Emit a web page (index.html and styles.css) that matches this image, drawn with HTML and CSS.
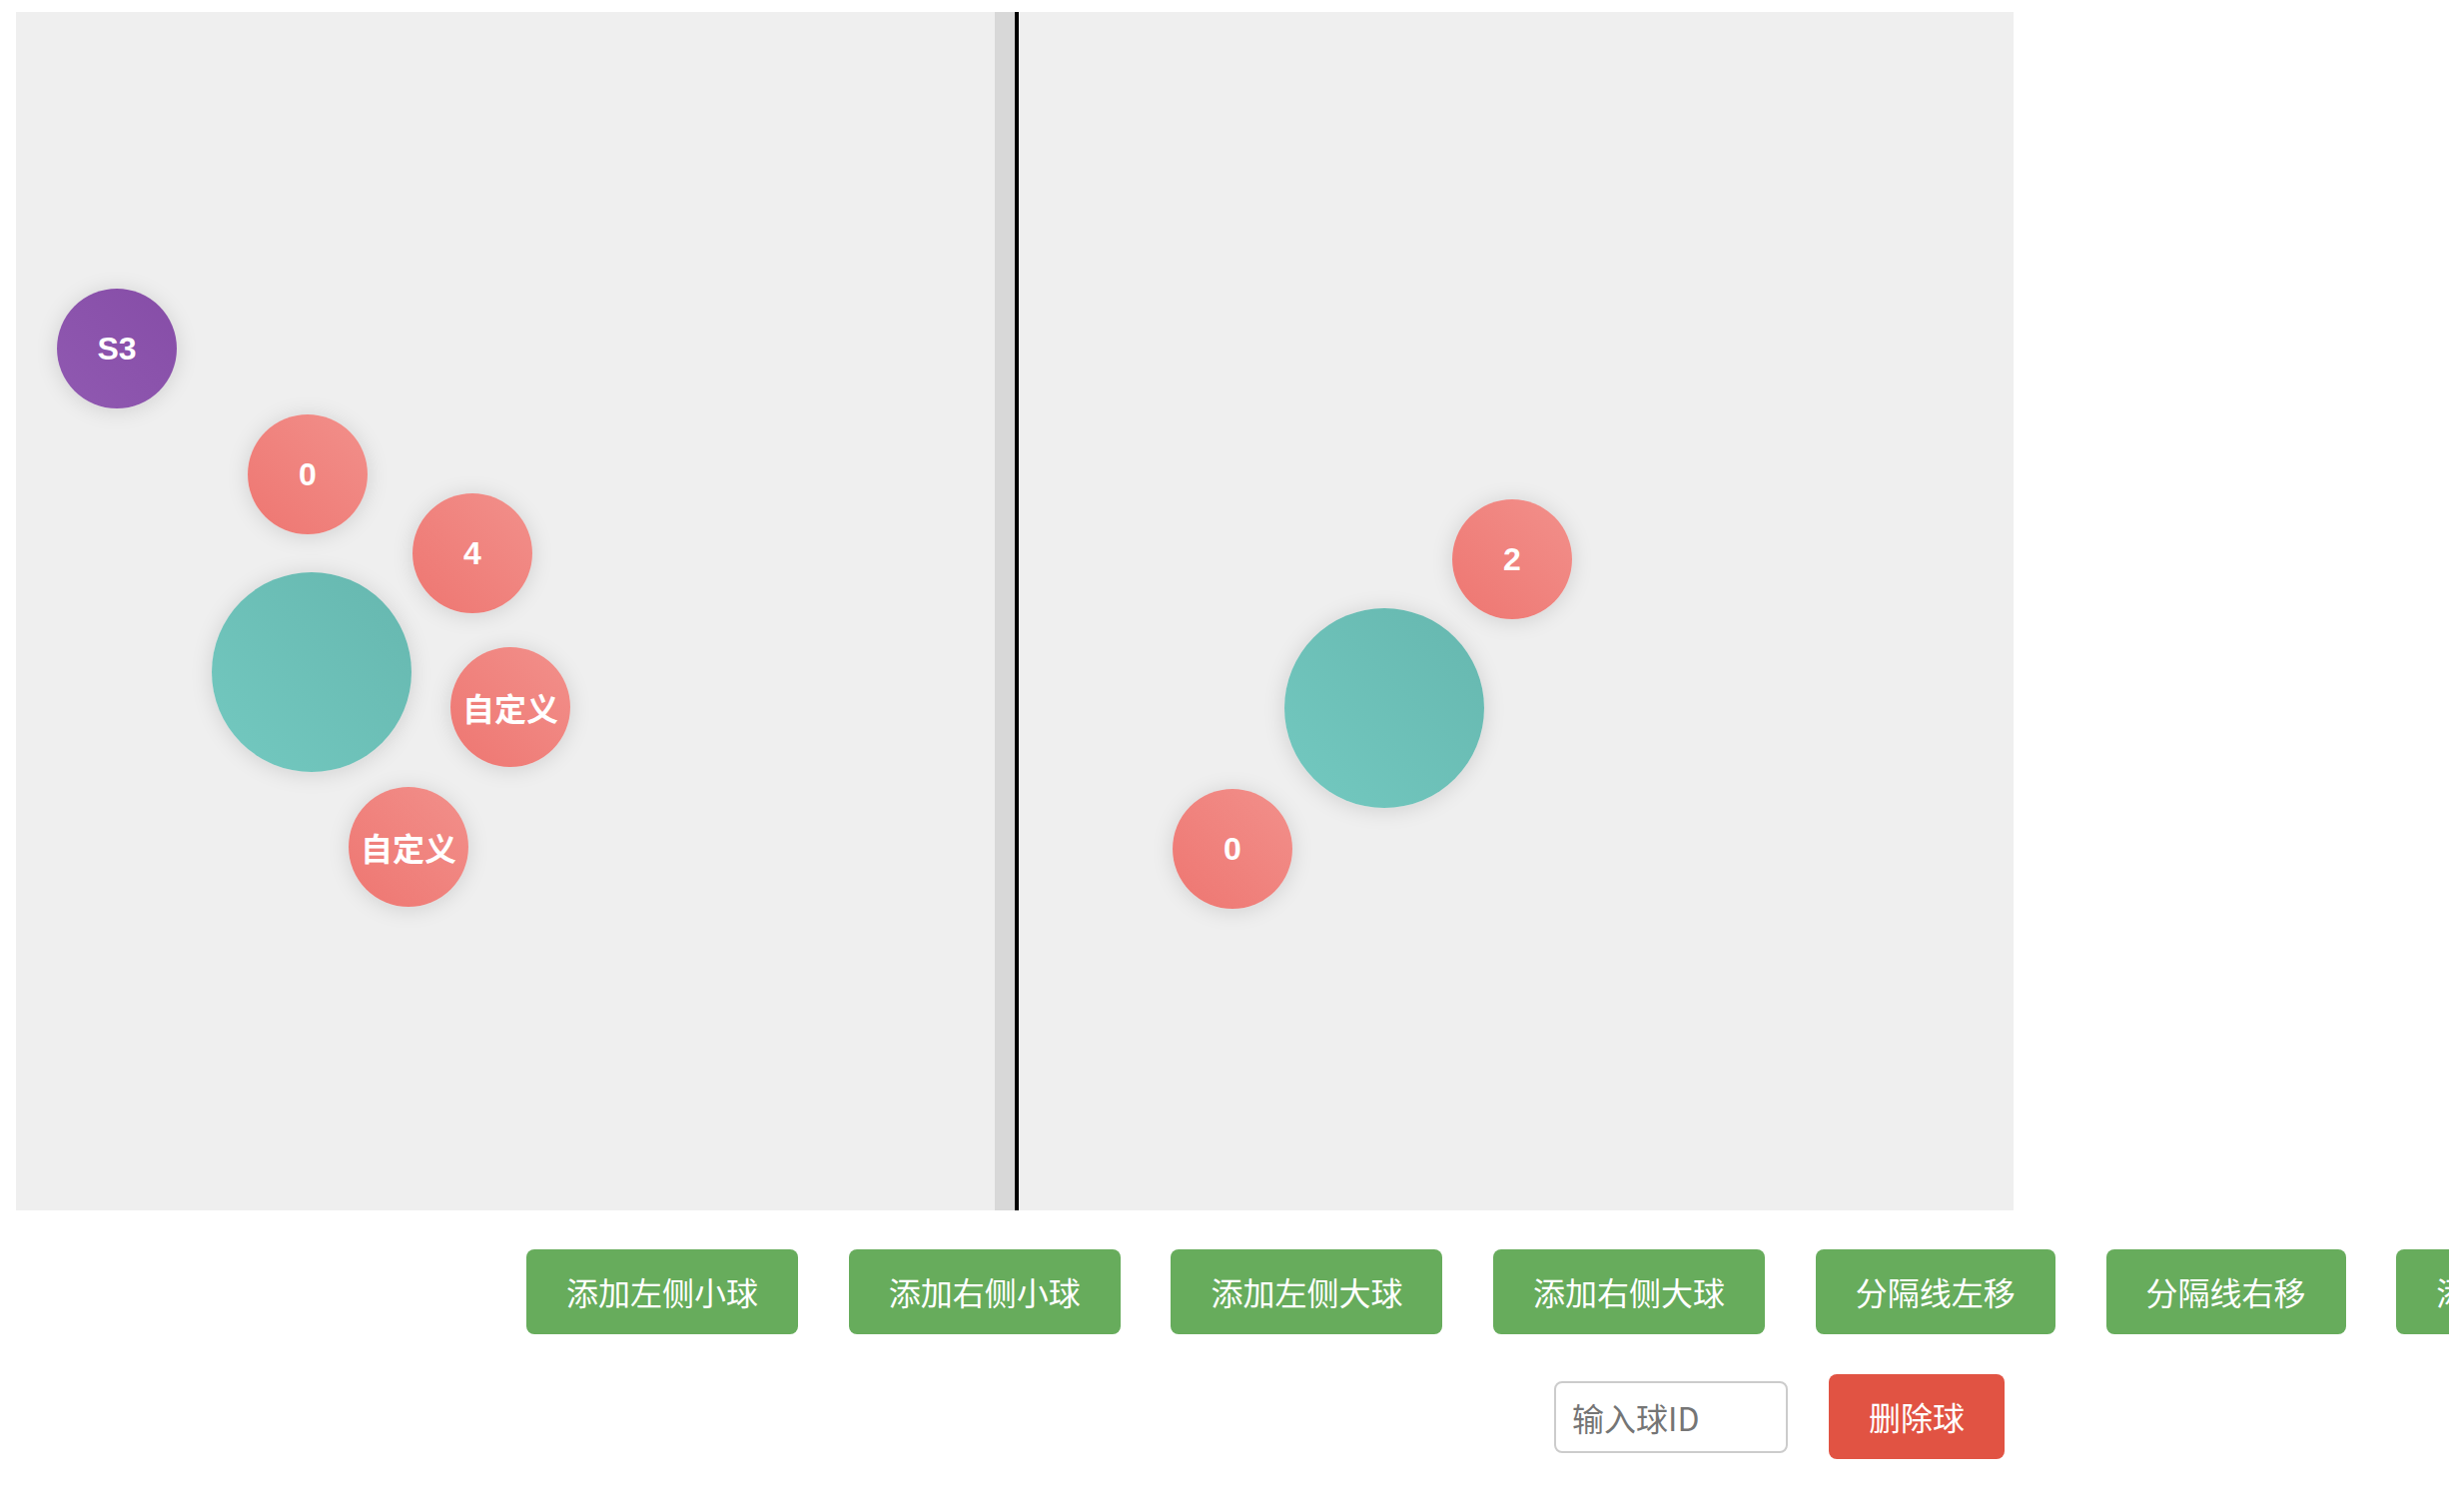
FILE: index.html
```html
<!DOCTYPE html>
<html lang="zh">
<head>
<meta charset="utf-8">
<title>小球</title>
<link rel="stylesheet" href="styles.css">
</head>
<body>
<div class="page">
  <div class="stage">
    <div class="half half-left"></div>
    <div class="splitter"><div class="handle"></div><div class="line"></div></div>
    <div class="half half-right"></div>

    <div class="ball small purple" style="left:41px;top:277px">S3</div>
    <div class="ball small red" style="left:232px;top:403px">0</div>
    <div class="ball small red" style="left:397px;top:482px">4</div>
    <div class="ball big teal" style="left:196px;top:561px"></div>
    <div class="ball small red" style="left:435px;top:636px">自定义</div>
    <div class="ball small red" style="left:333px;top:776px">自定义</div>

    <div class="ball small red" style="left:1438px;top:488px">2</div>
    <div class="ball big teal" style="left:1270px;top:597px"></div>
    <div class="ball small red" style="left:1158px;top:778px">0</div>
  </div>

  <div class="controls">
    <div class="row row-main">
      <button class="btn green">添加左侧小球</button>
      <button class="btn green">添加右侧小球</button>
      <button class="btn green">添加左侧大球</button>
      <button class="btn green">添加右侧大球</button>
      <button class="btn green">分隔线左移</button>
      <button class="btn green">分隔线右移</button>
      <button class="btn green">添加自定义球</button>
    </div>
    <div class="row row-delete">
      <input class="id-input" type="text" placeholder="输入球ID">
      <button class="btn red-btn">删除球</button>
    </div>
  </div>
</div>
</body>
</html>
```

FILE: styles.css
```css
html, body {
  margin: 0;
  padding: 0;
  overflow: hidden;
  background: #ffffff;
  font-family: "Liberation Sans", "Noto Sans CJK SC", sans-serif;
}

.page {
  padding: 12px 0 0 16px;
}

.stage {
  position: relative;
  width: 2000px;
  height: 1200px;
  background: #efefef;
  display: flex;
}

.half {
  flex: 0 0 980px;
  height: 100%;
}

.half-right {
  flex: 1 1 auto;
}

.splitter {
  display: flex;
  height: 100%;
}

.handle {
  width: 20px;
  background: #d8d8d8;
}

.line {
  width: 4px;
  background: #000000;
}

.ball {
  position: absolute;
  border-radius: 50%;
  display: flex;
  align-items: center;
  justify-content: center;
  color: #ffffff;
  font-weight: bold;
  font-size: 32px;
  font-family: "Liberation Sans", "Noto Sans CJK SC", sans-serif;
  box-shadow: 0 2px 22px rgba(0, 0, 0, 0.13);
}

.small {
  width: 120px;
  height: 120px;
}

.big {
  width: 200px;
  height: 200px;
}

.red {
  background: linear-gradient(45deg, #ee7671 0%, #f2908b 100%);
}

.teal {
  background: linear-gradient(45deg, #73c9c0 0%, #66b7af 100%);
}

.purple {
  background: linear-gradient(45deg, #9059b1 0%, #864da7 100%);
}

.controls {
  display: flex;
  flex-direction: column;
}

.row {
  display: flex;
  align-items: center;
  flex-wrap: nowrap;
}

.row-main {
  margin-top: 39px;
  padding-left: 511px;
  gap: 50.7px;
}

.row-delete {
  margin-top: 40px;
  padding-left: 1540px;
  gap: 41px;
}

.btn {
  flex: 0 0 auto;
  border: none;
  border-radius: 8px;
  padding: 20px 40px;
  font-size: 32px;
  line-height: 45px;
  font-family: "Noto Sans CJK SC", sans-serif;
  color: #ffffff;
  white-space: nowrap;
  cursor: pointer;
}

.green {
  background: #67ac5c;
}

.red-btn {
  background: #e15343;
}

.id-input {
  box-sizing: border-box;
  width: 234px;
  height: 72px;
  border: 2px solid #cccccc;
  border-radius: 8px;
  padding: 10px 16px;
  font-size: 32px;
  font-family: "Noto Sans CJK SC", sans-serif;
  color: #333333;
  outline: none;
}

.id-input::placeholder {
  color: #757575;
}
```
